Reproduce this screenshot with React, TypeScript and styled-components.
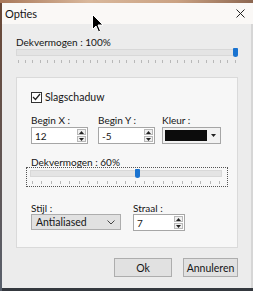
import React from "react";
import styled, { createGlobalStyle } from "styled-components";

const Global = createGlobalStyle`
  html, body { margin: 0; padding: 0; background: #ececec; }
  body { font-family: Lato, "Liberation Sans", sans-serif; }
  * { box-sizing: border-box; }
`;

const Screen = styled.div`
  position: relative;
  width: 253px;
  height: 291px;
  overflow: hidden;
  display: flex;
  flex-direction: column;
  background: linear-gradient(90deg, #a9785a, #d9b89c 35%, #caa283 70%, #8c6650);
`;

const Window = styled.div`
  margin-top: 3px;
  flex: 1;
  display: flex;
  flex-direction: column;
  border-left: 2px solid;
  border-image: linear-gradient(#6a4836, #59606c) 1;
  background: #ececec;
  font-size: 10px;
  color: #151515;
  box-shadow: inset -2px 0 0 #d6d6d6;
`;

const TitleBar = styled.div`
  height: 21px;
  display: flex;
  align-items: center;
  justify-content: space-between;
  padding: 0 8px 0 3px;
  background: #faf8f6;
`;

const Title = styled.span`
  font-size: 11px;
  line-height: 14px;
`;

const Body = styled.div`
  flex: 1;
  display: flex;
  flex-direction: column;
  padding: 0 13px 0 14px;
`;

const Label = styled.div<{ $mt?: number }>`
  line-height: 12px;
  height: 12px;
  margin-top: ${(p) => p.$mt ?? 0}px;
  white-space: nowrap;
`;

const SliderWrap = styled.div<{ $w: number; $mt?: number }>`
  position: relative;
  width: ${(p) => p.$w}px;
  margin-top: ${(p) => p.$mt ?? 0}px;
  display: flex;
  flex-direction: column;
`;

const Track = styled.div`
  height: 7px;
  background: #e4e4e4;
  border: 1px solid #d8d8d8;
`;

const Thumb = styled.div`
  position: absolute;
  top: -1px;
  width: 5px;
  height: 9px;
  background: #1a73d0;
  border-radius: 1px 1px 3px 3px;
`;

const Ticks = styled.div`
  display: flex;
  justify-content: space-between;
  margin-top: 4px;
  padding: 0 2px;
`;

const Tick = styled.span`
  width: 1px;
  height: 3px;
  background: #b8b8b8;
`;

const FocusBox = styled.div`
  margin-top: -1px;
  margin-left: -5px;
  width: 202px;
  height: 20px;
  border: 1px dotted #555;
  padding: 2px 4px 0 3px;
`;

const Panel = styled.div`
  margin-top: 14px;
  width: 222px;
  height: 171px;
  background: #f7f7f7;
  border: 1px solid #dadada;
  padding: 0 0 0 14px;
  display: flex;
  flex-direction: column;
`;

const CheckRow = styled.div`
  margin-top: 13px;
  display: flex;
  align-items: center;
  gap: 3px;
  line-height: 12px;
  font-size: 10.5px;
`;

const CheckBox = styled.span`
  width: 11px;
  height: 11px;
  border: 1px solid #333;
  background: #fff;
  display: flex;
  align-items: center;
  justify-content: center;
`;

const FieldRow = styled.div<{ $mt: number }>`
  display: flex;
  margin-top: ${(p) => p.$mt}px;
`;

const Field = styled.div<{ $w: number; $gap: number }>`
  width: ${(p) => p.$w}px;
  display: flex;
  flex-direction: column;
  gap: ${(p) => p.$gap}px;
`;

const SpinBox = styled.div<{ $w: number }>`
  width: ${(p) => p.$w}px;
  height: 17px;
  border: 1px solid #a6a6a6;
  background: #fff;
  display: flex;
  align-items: center;
  padding: 0 1px 0 3px;
`;

const SpinValue = styled.span`
  flex: 1;
  line-height: 12px;
`;

const SpinButtons = styled.div`
  display: flex;
  flex-direction: column;
  gap: 1px;
`;

const SpinBtn = styled.div`
  width: 9px;
  height: 6px;
  border: 1px solid #b8b8b8;
  background: #f0f0f0;
  display: flex;
  align-items: center;
  justify-content: center;
`;

const ColorBox = styled.div`
  width: 59px;
  height: 17px;
  border: 1px solid #a6a6a6;
  background: #f2f2f2;
  display: flex;
  align-items: center;
  padding: 2px;
  gap: 1px;
`;

const Swatch = styled.div`
  width: 42px;
  height: 11px;
  background: #0c0c0c;
`;

const ColorArrow = styled.div`
  flex: 1;
  display: flex;
  align-items: center;
  justify-content: center;
`;

const Combo = styled.div`
  width: 90px;
  height: 16px;
  border: 1px solid #adadad;
  background: #e1e1e1;
  display: flex;
  align-items: center;
  justify-content: space-between;
  padding: 0 5px 0 4px;
  line-height: 12px;
  font-size: 10.5px;
`;

const ButtonRow = styled.div`
  margin-top: 10px;
  display: flex;
  justify-content: flex-end;
  gap: 11px;
  padding-right: 2px;
`;

const Button = styled.div<{ $w: number }>`
  width: ${(p) => p.$w}px;
  height: 19px;
  border: 1px solid #adadad;
  background: #e1e1e1;
  display: flex;
  align-items: center;
  justify-content: center;
  line-height: 12px;
  font-size: 10.5px;
`;

const BottomEdge = styled.div`
  height: 3px;
  background: #34383e;
`;

const Cursor = styled.svg`
  position: absolute;
  left: 92px;
  top: 14px;
`;

const Up = () => (
  <svg width="5" height="3" viewBox="0 0 5 3"><path d="M0 3L2.5 0L5 3Z" fill="#222" /></svg>
);
const Down = () => (
  <svg width="5" height="3" viewBox="0 0 5 3"><path d="M0 0L2.5 3L5 0Z" fill="#222" /></svg>
);

const Spin = ({ value, w }: { value: string; w: number }) => (
  <SpinBox $w={w}>
    <SpinValue>{value}</SpinValue>
    <SpinButtons>
      <SpinBtn><Up /></SpinBtn>
      <SpinBtn><Down /></SpinBtn>
    </SpinButtons>
  </SpinBox>
);

const Slider = ({ w, ticks, thumb, mt }: { w: number; ticks: number; thumb: number; mt?: number }) => (
  <SliderWrap $w={w} $mt={mt}>
    <Track />
    <Thumb style={{ left: thumb }} />
    <Ticks>
      {Array.from({ length: ticks }).map((_, i) => (
        <Tick key={i} />
      ))}
    </Ticks>
  </SliderWrap>
);

export default function App() {
  return (
    <>
      <Global />
      <Screen>
        <Window>
          <TitleBar>
            <Title>Opties</Title>
            <svg width="9" height="9" viewBox="0 0 9 9">
              <path d="M0.5 0.5L8.5 8.5M8.5 0.5L0.5 8.5" stroke="#222" strokeWidth="1" />
            </svg>
          </TitleBar>
          <Body>
            <Label $mt={12}>Dekvermogen : 100%</Label>
            <Slider w={222} ticks={31} thumb={217} mt={1} />
            <Panel>
              <CheckRow>
                <CheckBox>
                  <svg width="9" height="8" viewBox="0 0 9 8">
                    <path d="M1 4L3.5 6.5L8 1" stroke="#222" strokeWidth="1.2" fill="none" />
                  </svg>
                </CheckBox>
                <span>Slagschaduw</span>
              </CheckRow>
              <FieldRow $mt={11}>
                <Field $w={67} $gap={1}>
                  <Label>Begin X :</Label>
                  <Spin value="12" w={57} />
                </Field>
                <Field $w={64} $gap={1}>
                  <Label>Begin Y :</Label>
                  <Spin value="-5" w={57} />
                </Field>
                <Field $w={60} $gap={1}>
                  <Label>Kleur :</Label>
                  <ColorBox>
                    <Swatch />
                    <ColorArrow>
                      <Down />
                    </ColorArrow>
                  </ColorBox>
                </Field>
              </FieldRow>
              <Label $mt={12}>Dekvermogen : 60%</Label>
              <FocusBox>
                <Slider w={192} ticks={21} thumb={105} />
              </FocusBox>
              <FieldRow $mt={15}>
                <Field $w={102} $gap={0}>
                  <Label>Stijl :</Label>
                  <Combo>
                    <span>Antialiased</span>
                    <svg width="8" height="5" viewBox="0 0 8 5">
                      <path d="M0.5 0.5L4 4L7.5 0.5" stroke="#444" fill="none" />
                    </svg>
                  </Combo>
                </Field>
                <Field $w={60} $gap={0}>
                  <Label>Straal :</Label>
                  <Spin value="7" w={52} />
                </Field>
              </FieldRow>
            </Panel>
            <ButtonRow>
              <Button $w={58}>Ok</Button>
              <Button $w={55}>Annuleren</Button>
            </ButtonRow>
          </Body>
          <BottomEdge />
        </Window>
        <Cursor width="12" height="19" viewBox="0 0 12 19">
          <path d="M0.5 0.5L0.5 15.5L4 12L6.5 18L8.5 17L6 11L11 11Z" fill="#000" stroke="#fff" strokeWidth="1" />
        </Cursor>
      </Screen>
    </>
  );
}
